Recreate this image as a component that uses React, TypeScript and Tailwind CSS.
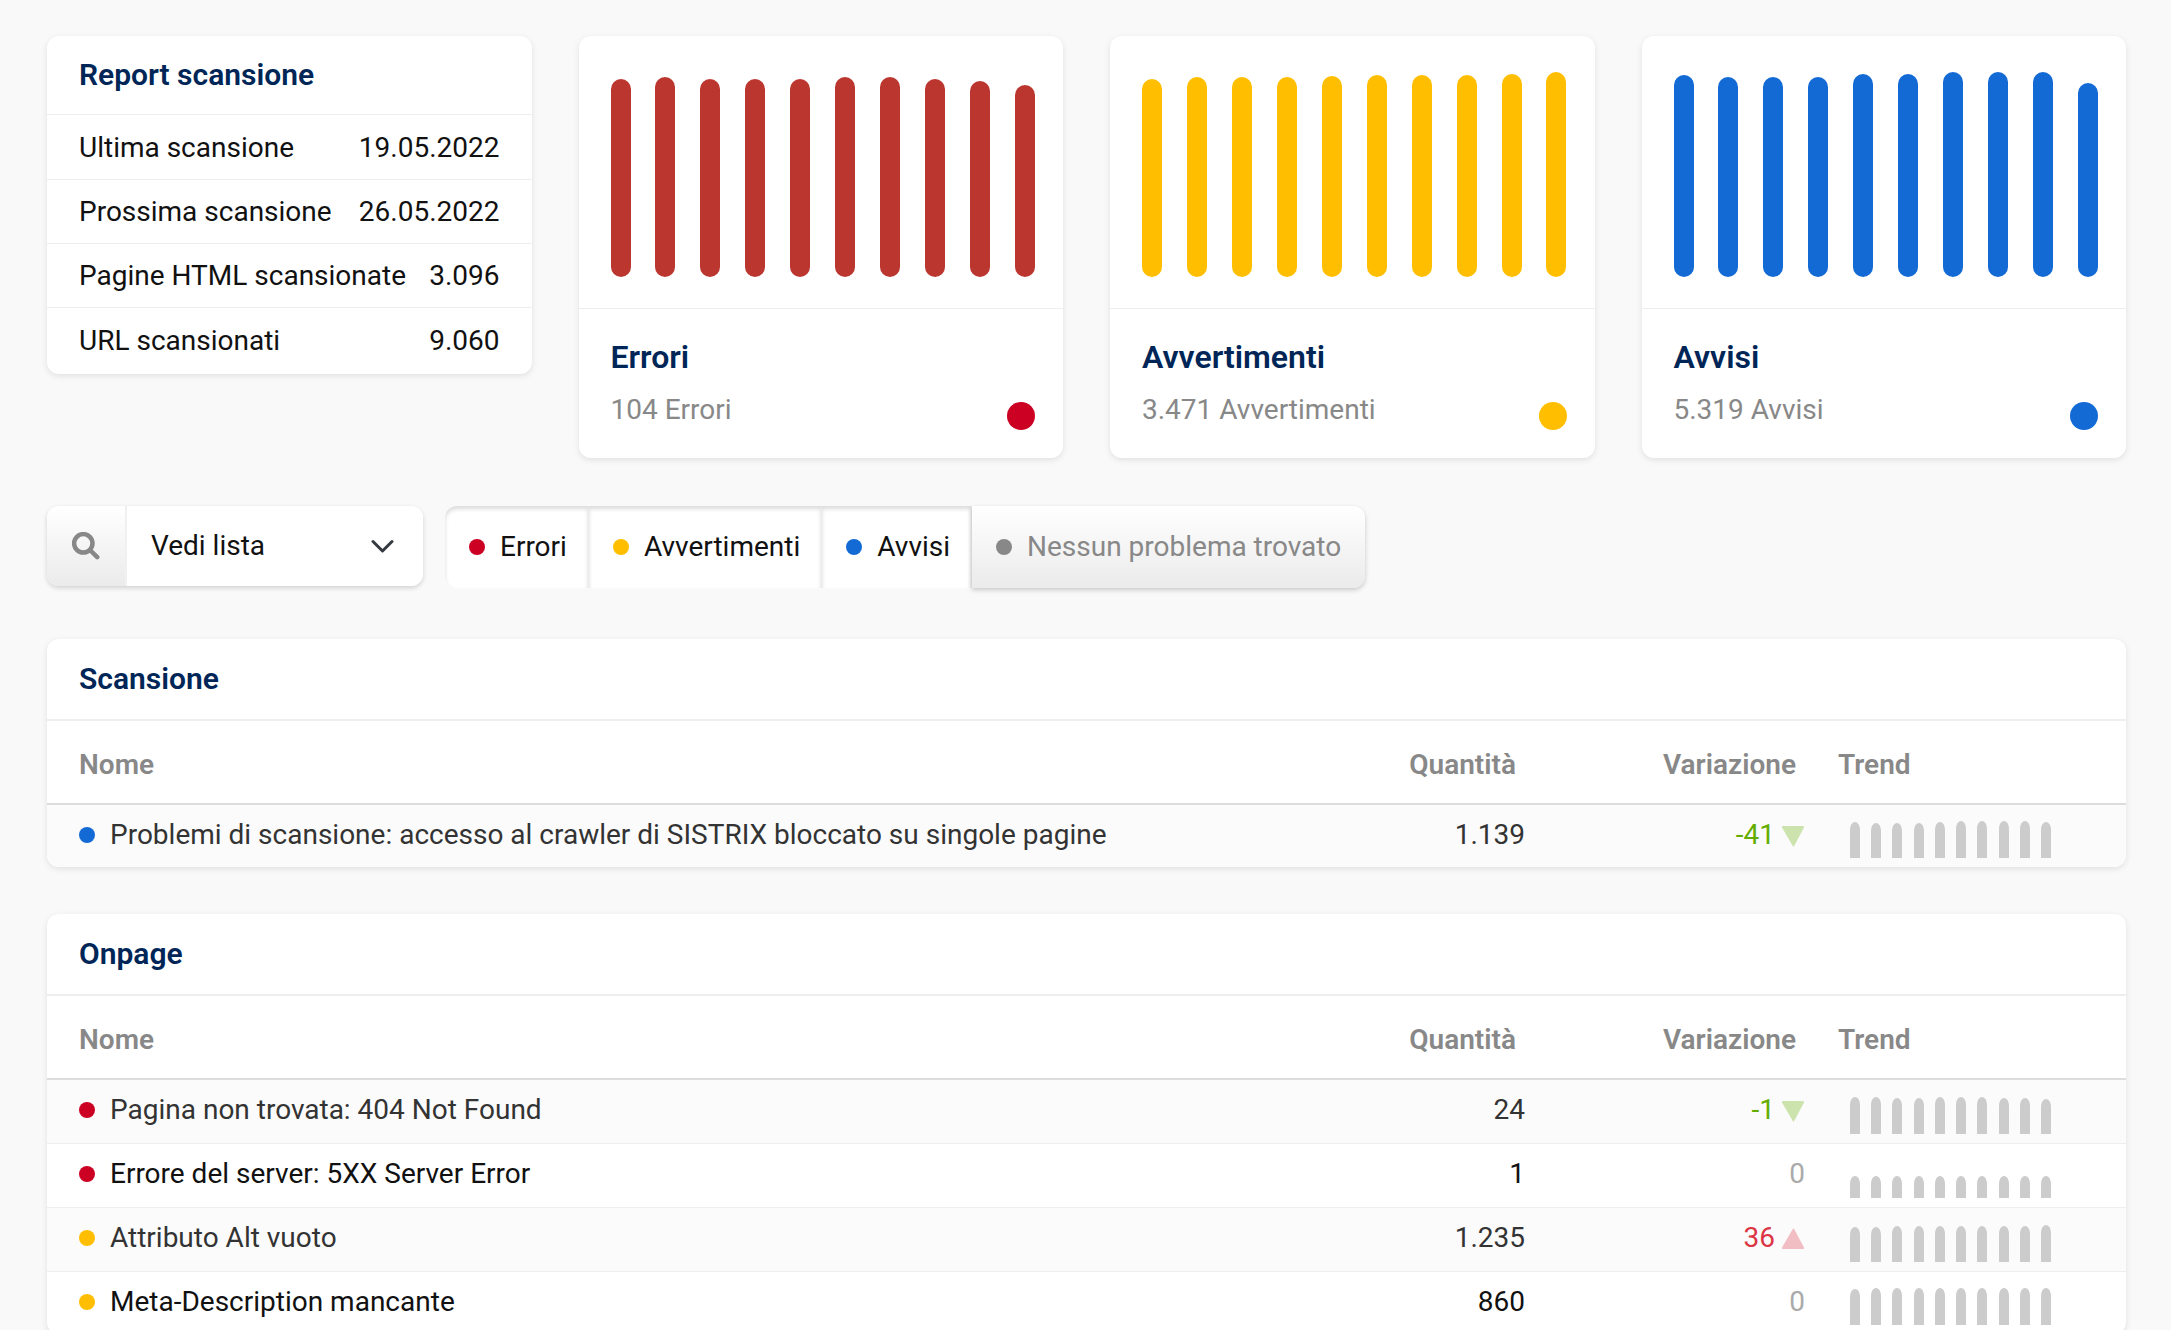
type Level = "error" | "warning" | "notice" | "none";

const dotColors: Record<Level, string> = {
  error: "bg-[#cc0022]",
  warning: "bg-[#ffbf00]",
  notice: "bg-[#136ad5]",
  none: "bg-[#888888]",
};

const reportRows = [
  { label: "Ultima scansione", value: "19.05.2022" },
  { label: "Prossima scansione", value: "26.05.2022" },
  { label: "Pagine HTML scansionate", value: "3.096" },
  { label: "URL scansionati", value: "9.060" },
];

const summaries = [
  {
    level: "error" as Level,
    title: "Errori",
    text: "104 Errori",
    barColor: "bg-[#bc3630]",
    bars: [198, 200, 198, 198, 198, 200, 200, 198, 196, 192],
  },
  {
    level: "warning" as Level,
    title: "Avvertimenti",
    text: "3.471 Avvertimenti",
    barColor: "bg-[#ffbf00]",
    bars: [198, 200, 200, 200, 201, 202, 202, 202, 203, 205],
  },
  {
    level: "notice" as Level,
    title: "Avvisi",
    text: "5.319 Avvisi",
    barColor: "bg-[#136ad5]",
    bars: [202, 200, 200, 200, 203, 203, 205, 205, 205, 194],
  },
];

const filters = [
  { level: "error" as Level, label: "Errori", active: true },
  { level: "warning" as Level, label: "Avvertimenti", active: true },
  { level: "notice" as Level, label: "Avvisi", active: true },
  { level: "none" as Level, label: "Nessun problema trovato", active: false },
];

interface Issue {
  level: Level;
  name: string;
  count: string;
  change: number;
  trend: number[];
}

const crawlIssues: Issue[] = [
  {
    level: "notice",
    name: "Problemi di scansione: accesso al crawler di SISTRIX bloccato su singole pagine",
    count: "1.139",
    change: -41,
    trend: [36, 35, 35, 35, 36, 37, 37, 37, 37, 36],
  },
];

const onpageIssues: Issue[] = [
  {
    level: "error",
    name: "Pagina non trovata: 404 Not Found",
    count: "24",
    change: -1,
    trend: [37, 37, 36, 36, 37, 37, 37, 36, 36, 35],
  },
  {
    level: "error",
    name: "Errore del server: 5XX Server Error",
    count: "1",
    change: 0,
    trend: [22, 22, 22, 22, 22, 22, 22, 22, 22, 22],
  },
  {
    level: "warning",
    name: "Attributo Alt vuoto",
    count: "1.235",
    change: 36,
    trend: [35, 35, 36, 36, 36, 36, 36, 36, 36, 37],
  },
  {
    level: "warning",
    name: "Meta-Description mancante",
    count: "860",
    change: 0,
    trend: [36, 37, 37, 37, 37, 37, 37, 37, 37, 37],
  },
];

function Dot({ level }: { level: Level }) {
  return <span className={`block size-4 shrink-0 rounded-full ${dotColors[level]}`} />;
}

function ReportCard() {
  return (
    <section className="rounded-xl bg-white shadow-[0_2px_6px_rgba(0,0,0,0.1)]">
      <h2 className="flex h-[79px] items-center border-b border-[#eeeeee] px-8 text-[30px] font-semibold text-[#002657]">
        Report scansione
      </h2>
      <dl className="py-px">
        {reportRows.map((row) => (
          <div
            key={row.label}
            className="flex h-16 items-center justify-between border-b border-[#eeeeee] px-8 last:h-[65px] last:border-b-0"
          >
            <dt>{row.label}</dt>
            <dd>{row.value}</dd>
          </div>
        ))}
      </dl>
    </section>
  );
}

function SummaryCard({ summary }: { summary: (typeof summaries)[number] }) {
  return (
    <section className="rounded-xl bg-white shadow-[0_2px_6px_rgba(0,0,0,0.1)]">
      <div className="flex h-[273px] items-end justify-between border-b border-[#eeeeee] pr-7 pb-[31px] pl-8">
        {summary.bars.map((height, i) => (
          <div key={i} className={`w-5 rounded-full ${summary.barColor}`} style={{ height }} />
        ))}
      </div>
      <div className="flex items-end justify-between px-8 pt-7 pb-7">
        <div>
          <h2 className="text-[32px] leading-10 font-semibold text-[#002657]">{summary.title}</h2>
          <p className="mt-[13px] leading-10 text-[#888888]">{summary.text}</p>
        </div>
        <span className={`-mr-1 size-7 rounded-full ${dotColors[summary.level]}`} />
      </div>
    </section>
  );
}

function Toolbar() {
  return (
    <div className="mt-12 flex items-start gap-[22px]">
      <div className="flex h-20 overflow-hidden rounded-xl bg-white shadow-[0_2px_5px_rgba(0,0,0,0.16)]">
        <button
          type="button"
          aria-label="Cerca"
          className="flex w-20 items-center justify-center border-r-2 border-[#f0f0f0] bg-linear-to-b from-white to-[#ebebeb] text-[#888888]"
        >
          <svg className="size-7" viewBox="0 0 28 28" fill="none" stroke="currentColor" strokeWidth="4.500">
            <circle cx="11.300" cy="11.300" r="9.200" />
            <path d="m18 18 7.200 7.200" strokeLinecap="round" />
          </svg>
        </button>
        <div className="relative">
          <select
            aria-label="Vista"
            className="h-full w-[296px] appearance-none bg-white pr-14 pl-6 text-[#111111] outline-none"
          >
            <option>Vedi lista</option>
          </select>
          <svg
            className="pointer-events-none absolute top-8 right-7 h-4 w-6"
            viewBox="0 0 24 16"
            fill="none"
            stroke="#343a40"
            strokeWidth="3"
            strokeLinecap="round"
            strokeLinejoin="round"
          >
            <path d="M2 3.500 11.500 13l9.500-9.500" />
          </svg>
        </div>
      </div>

      <div className="flex h-[82px] rounded-xl">
        {filters.map((filter) => (
          <button
            key={filter.label}
            type="button"
            aria-pressed={filter.active}
            className={`flex items-center gap-[15px] pr-[21px] pl-6 first:rounded-l-xl last:rounded-r-xl last:pr-6 ${
              filter.active
                ? "border-r border-[#eaeaea] bg-white text-[#111111] shadow-[inset_0_3px_4px_rgba(0,0,0,0.14)]"
                : "bg-linear-to-b from-white to-[#ebebeb] text-[#888888] shadow-[0_2px_5px_rgba(0,0,0,0.2)]"
            }`}
          >
            <Dot level={filter.level} />
            {filter.label}
          </button>
        ))}
      </div>
    </div>
  );
}

function Change({ value }: { value: number }) {
  if (value === 0) {
    return <span className="text-[#aaaaaa]">0</span>;
  }
  const down = value < 0;
  return (
    <span className={`flex items-center justify-end gap-1.5 ${down ? "text-[#64ad00]" : "text-[#dc3545]"}`}>
      {value}
      <svg className="size-6" viewBox="0 0 24 24" fill="currentColor" opacity="0.3">
        <path
          d={
            down
              ? "M2 3h20q1.500 0 1 1.500L13.200 23q-.7 1-1.400 0L1 4.500Q.5 3 2 3z"
              : "M2 23h20q1.500 0 1-1.500L13.200 3q-.7-1-1.400 0L1 21.500Q.5 23 2 23z"
          }
        />
      </svg>
    </span>
  );
}

function IssueTable({ title, issues }: { title: string; issues: Issue[] }) {
  return (
    <section className="overflow-hidden rounded-xl bg-white shadow-[0_2px_6px_rgba(0,0,0,0.1)]">
      <h2 className="flex h-[82px] items-center border-b-2 border-[#eeeeee] px-8 text-[30px] font-semibold text-[#002657]">
        {title}
      </h2>
      <table className="w-full table-fixed">
        <thead>
          <tr className="h-[83px] border-b-2 border-[#dddddd] text-[#888888]">
            <th className="pt-1.5 pl-8 text-left font-semibold">Nome</th>
            <th className="w-[280px] pt-1.5 pr-6 text-right font-semibold">Quantità</th>
            <th className="w-[280px] pt-1.5 pr-6 text-right font-semibold">Variazione</th>
            <th className="w-[306px] pt-1.5 pl-[18px] text-left font-semibold">Trend</th>
          </tr>
        </thead>
        <tbody>
          {issues.map((issue) => (
            <tr
              key={issue.name}
              className="h-16 border-b border-[#eeeeee] text-[#111111] last:h-[63px] last:border-b-0 odd:bg-[#fbfbfb] odd:text-[#333333]"
            >
              <td className="pb-0.5 pl-8">
                <div className="flex items-center gap-[15px]">
                  <Dot level={issue.level} />
                  {issue.name}
                </div>
              </td>
              <td className="pr-[15px] pb-0.5 text-right">{issue.count}</td>
              <td className="pr-[15px] pb-0.5 text-right">
                <Change value={issue.change} />
              </td>
              <td className="pb-[9px] pl-[30px] align-bottom">
                <div className="flex w-[201px] items-end justify-between">
                  {issue.trend.map((height, i) => (
                    <div
                      key={i}
                      className="w-[10px] rounded-[5px_5px_0_0/8px_8px_0_0] bg-[#cccccc]"
                      style={{ height }}
                    />
                  ))}
                </div>
              </td>
            </tr>
          ))}
        </tbody>
      </table>
    </section>
  );
}

export default function App() {
  return (
    <main className="min-h-screen bg-[#f9f9f9] pt-9 pr-[45px] pl-[47px] font-['Roboto',sans-serif] text-[28px] leading-9 text-[#111111]">
      <div className="grid grid-cols-4 items-start gap-[47px]">
        <ReportCard />
        {summaries.map((summary) => (
          <SummaryCard key={summary.title} summary={summary} />
        ))}
      </div>

      <Toolbar />

      <div className="mt-[51px] space-y-[47px]">
        <IssueTable title="Scansione" issues={crawlIssues} />
        <IssueTable title="Onpage" issues={onpageIssues} />
      </div>
    </main>
  );
}
